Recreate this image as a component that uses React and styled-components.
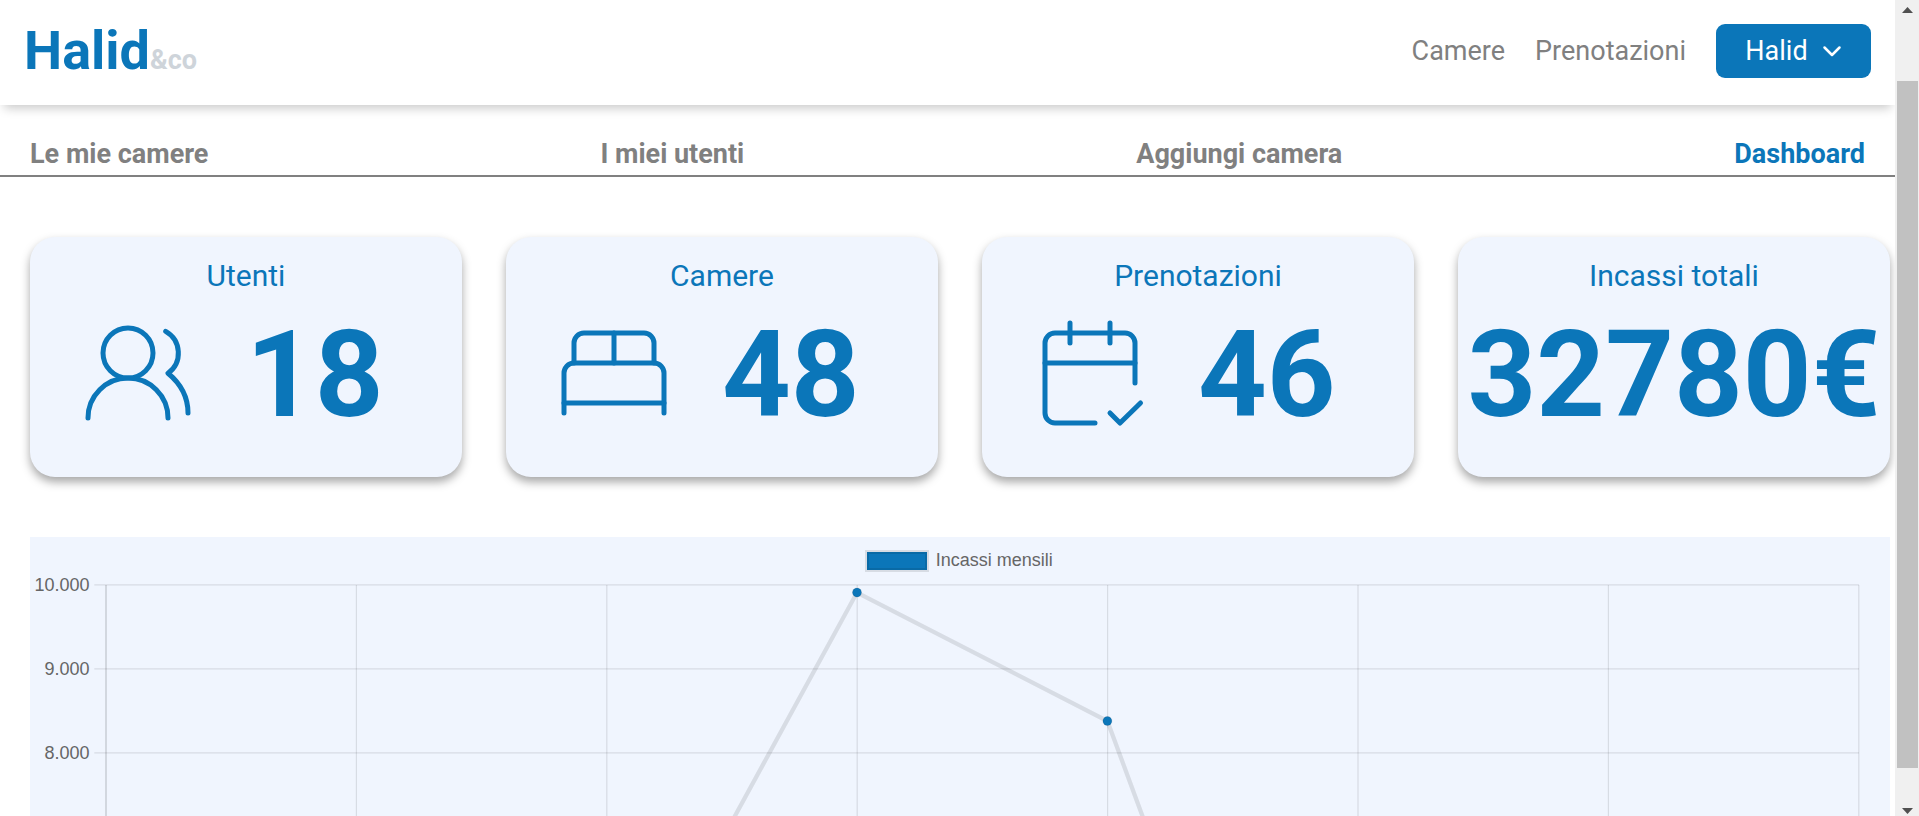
import React from "react";
import styled, { createGlobalStyle } from "styled-components";

const BLUE = "#0b76b9";
const PANEL = "#f0f5fe";

const GlobalStyle = createGlobalStyle`
  * { box-sizing: border-box; }
  html, body { margin: 0; overflow: hidden; background: #fff; }
  body { font-family: Roboto, "Liberation Sans", sans-serif; }
`;

const Screen = styled.div`
  display: flex;
  height: 816px;
  overflow: hidden;
`;

const Page = styled.div`
  width: 1895px;
  flex: none;
  height: 816px;
  overflow: hidden;
`;

const Header = styled.header`
  height: 105px;
  padding: 0 24px 3px 24px;
  display: flex;
  align-items: center;
  justify-content: space-between;
  background: #fff;
  box-shadow: 0 7px 10px -4px rgba(0, 0, 0, 0.22);
`;

const Logo = styled.a`
  display: flex;
  align-items: baseline;
  padding-top: 8px;
  font-size: 54px;
  font-weight: 700;
  line-height: 64px;
  color: ${BLUE};
`;

const LogoSuffix = styled.span`
  font-size: 27px;
  color: #ced4da;
`;

const MainNav = styled.nav`
  display: flex;
  align-items: center;
  gap: 30px;
`;

const NavLink = styled.a`
  font-size: 27px;
  line-height: 32px;
  color: #808080;
`;

const UserButton = styled.button`
  display: flex;
  align-items: center;
  justify-content: center;
  gap: 14px;
  width: 155px;
  height: 54px;
  padding: 0;
  border: 0;
  border-radius: 9px;
  background: ${BLUE};
  color: #fff;
  font: 400 27px/32px Roboto, sans-serif;
`;

const Tabs = styled.nav`
  height: 72px;
  padding: 0 30px 5px;
  display: flex;
  align-items: flex-end;
  justify-content: space-between;
  border-bottom: 2px solid #808080;
`;

const Tab = styled.a`
  font-size: 27px;
  font-weight: 700;
  line-height: 32px;
  color: ${(p) => (p.$active ? BLUE : "#808080")};
`;

const Stats = styled.section`
  display: grid;
  grid-template-columns: repeat(4, 432px);
  gap: 44px;
  padding: 60px 0 60px 30px;
`;

const Card = styled.article`
  height: 240px;
  padding-top: 21px;
  border-radius: 25px;
  background: ${PANEL};
  color: ${BLUE};
  box-shadow: 0 5px 10px rgba(0, 0, 0, 0.35);
`;

const CardTitle = styled.h2`
  margin: 0;
  font-size: 30px;
  font-weight: 400;
  line-height: 36px;
  text-align: center;
`;

const CardBody = styled.div`
  display: flex;
  align-items: center;
  height: 120px;
  margin-top: 18px;
  gap: 48px;
  padding-left: ${(p) => (p.$wide ? "0" : "48px")};
  justify-content: ${(p) => (p.$wide ? "center" : "flex-start")};
`;

const CardIcon = styled.svg`
  flex: none;
  width: 120px;
  height: 120px;
  fill: none;
  stroke: currentColor;
  stroke-width: 5;
  stroke-linecap: round;
  stroke-linejoin: round;
`;

const Value = styled.span`
  padding-top: 5px;
  font-size: 120px;
  font-weight: 700;
  line-height: 120px;
`;

const ChartPanel = styled.section`
  margin-left: 30px;
  width: 1860px;
  height: 279px;
  overflow: hidden;
  background: ${PANEL};
`;

const Chart = styled.svg`
  display: block;
  font-family: "Liberation Sans", Arial, sans-serif;
  font-size: 18px;
  fill: #666;
`;

const ScrollTrack = styled.div`
  display: flex;
  flex-direction: column;
  align-items: center;
  width: 24px;
  height: 816px;
  padding-right: 1px;
  padding-left: 2px;
  background: #f0f0f0;
`;

const ScrollArrow = styled.svg`
  display: block;
  width: 21px;
  height: ${(p) => p.$height}px;
  fill: #505050;
`;

const Thumb = styled.div`
  width: 21px;
  height: 687px;
  background: #c1c1c1;
`;

const UsersIcon = () => (
  <CardIcon viewBox="0 0 120 120">
    <circle cx="50" cy="41" r="25" />
    <path d="M10 106A40 40 0 0 1 90 106" />
    <path d="M87.7 19.3A25 25 0 0 1 90 61.3C103 72 110 86 110 101" />
  </CardIcon>
);

const BedIcon = () => (
  <CardIcon viewBox="0 0 120 120">
    <path d="M20 51V31A10 10 0 0 1 30 21H90A10 10 0 0 1 100 31V51" />
    <path d="M60 21V51M10 91H110" />
    <path d="M10 101V61A10 10 0 0 1 20 51H100A10 10 0 0 1 110 61V101" />
  </CardIcon>
);

const CalendarIcon = () => (
  <CardIcon viewBox="0 0 120 120">
    <path d="M65 111H25A10 10 0 0 1 15 101V31A10 10 0 0 1 25 21H95A10 10 0 0 1 105 31V71" />
    <path d="M15 51H105M40 11V31M80 11V31" />
    <path d="M80 101L90 111L110.5 91" />
  </CardIcon>
);

const STATS = [
  { title: "Utenti", value: "18", Icon: UsersIcon },
  { title: "Camere", value: "48", Icon: BedIcon },
  { title: "Prenotazioni", value: "46", Icon: CalendarIcon },
  { title: "Incassi totali", value: "32780€" },
];

const ROWS = [
  { label: "10.000", y: 47.8 },
  { label: "9.000", y: 131.8 },
  { label: "8.000", y: 215.8 },
];
const COLUMNS = [1, 2, 3, 4, 5, 6, 7].map((i) => 76 + i * 250.4);
const POINTS = [
  [827, 55.5],
  [1077.4, 184],
];

function IncomeChart() {
  return (
    <ChartPanel>
      <Chart width="1860" height="279" viewBox="0 0 1860 279">
        <g stroke="rgba(0,0,0,0.1)" strokeWidth="1.25">
          {ROWS.map((r) => (
            <line key={r.label} x1="64.3" x2="1829" y1={r.y} y2={r.y} />
          ))}
          {COLUMNS.map((x) => (
            <line key={x} x1={x} x2={x} y1="48" y2="279" />
          ))}
          <line x1="76" x2="76" y1="48" y2="279" stroke="rgba(0,0,0,0.2)" />
        </g>
        <polyline
          points="576.6,514 827,55.5 1077.4,184 1327.8,863"
          fill="none"
          stroke="rgba(0,0,0,0.1)"
          strokeWidth="4.3"
        />
        {POINTS.map(([x, y]) => (
          <circle key={x} cx={x} cy={y} r="4.5" fill={BLUE} stroke="rgba(0,0,0,0.1)" />
        ))}
        {ROWS.map((r) => (
          <text key={r.label} x="59.5" y={r.y + 5.7} textAnchor="end">
            {r.label}
          </text>
        ))}
        <rect x="837" y="15" width="60" height="18" fill={BLUE} />
        <rect x="837" y="15" width="60" height="18" fill="none" stroke="rgba(0,0,0,0.1)" strokeWidth="4" />
        <text x="905.8" y="29">Incassi mensili</text>
      </Chart>
    </ChartPanel>
  );
}

export default function App() {
  return (
    <>
      <GlobalStyle />
      <Screen>
        <Page>
          <Header>
            <Logo>
              Halid<LogoSuffix>&amp;co</LogoSuffix>
            </Logo>
            <MainNav>
              <NavLink>Camere</NavLink>
              <NavLink>Prenotazioni</NavLink>
              <UserButton>
                Halid
                <svg width="20" height="20" viewBox="0 0 20 20" fill="none" stroke="#fff" strokeWidth="2.5" strokeLinecap="round" strokeLinejoin="round">
                  <path d="M2.5 6.5L10 14L17.5 6.5" />
                </svg>
              </UserButton>
            </MainNav>
          </Header>
          <Tabs>
            <Tab>Le mie camere</Tab>
            <Tab>I miei utenti</Tab>
            <Tab>Aggiungi camera</Tab>
            <Tab $active>Dashboard</Tab>
          </Tabs>
          <Stats>
            {STATS.map(({ title, value, Icon }) => (
              <Card key={title}>
                <CardTitle>{title}</CardTitle>
                <CardBody $wide={!Icon}>
                  {Icon && <Icon />}
                  <Value>{value}</Value>
                </CardBody>
              </Card>
            ))}
          </Stats>
          <IncomeChart />
        </Page>
        <ScrollTrack>
          <ScrollArrow $height={81} viewBox="0 0 21 81">
            <path d="M5 13L10.5 7L16 13Z" />
          </ScrollArrow>
          <Thumb />
          <ScrollArrow $height={48} viewBox="0 0 21 48">
            <path d="M5 40L10.5 46L16 40Z" />
          </ScrollArrow>
        </ScrollTrack>
      </Screen>
    </>
  );
}
